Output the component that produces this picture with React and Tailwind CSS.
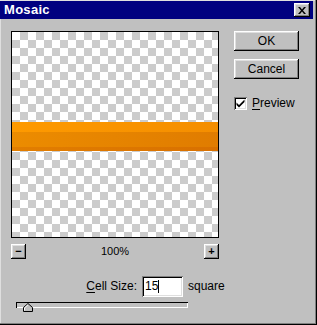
import React from "react";

const raised =
  "bg-[#c0c0c0] shadow-[inset_-1px_-1px_#000,inset_1px_1px_#fff,inset_-2px_-2px_#808080,inset_2px_2px_#dfdfdf]";
const sunken =
  "shadow-[inset_1px_1px_#808080,inset_-1px_-1px_#fff,inset_2px_2px_#000,inset_-2px_-2px_#dfdfdf]";

function Checker() {
  return (
    <div className="w-full h-full bg-white bg-[length:16px_16px] bg-[linear-gradient(45deg,#cccccc_25%,transparent_25%,transparent_75%,#cccccc_75%),linear-gradient(45deg,#cccccc_25%,transparent_25%,transparent_75%,#cccccc_75%)] bg-[position:0_0,8px_8px] flex flex-col">
      <div className="h-[90px]" />
      <div className="h-[29px] flex flex-col">
        <div className="h-[10px] bg-gradient-to-r from-[#fe9a00] to-[#f48e00]" />
        <div className="h-[15px] bg-gradient-to-r from-[#ec8c00] to-[#e07c00]" />
        <div className="h-[4px] bg-gradient-to-r from-[#e27e00] to-[#d87000]" />
      </div>
    </div>
  );
}

function Button({ children }) {
  return (
    <div className={`${raised} w-[65px] h-[20px] flex items-center justify-center text-[12px] text-black`}>
      {children}
    </div>
  );
}

function SmallButton({ children }) {
  return (
    <div className={`${raised} w-[15px] h-[15px] flex items-center justify-center text-[11px] leading-none font-bold text-black`}>
      {children}
    </div>
  );
}

export default function App() {
  return (
    <div
      className="w-[317px] h-[325px] bg-[#c0c0c0] shadow-[inset_-1px_-1px_#000,inset_-2px_-2px_#808080,inset_1px_1px_#dfdfdf] pt-[1px] pr-[4px] flex flex-col select-none"
      style={{ fontFamily: '"Liberation Sans", Arial, sans-serif' }}
    >
      <div className="h-[18px] bg-[#000080] flex items-center justify-between pl-[4px] pr-[3px]">
        <span className="text-white font-bold text-[13px] tracking-[0.3px]">Mosaic</span>
        <div className={`${raised} w-[16px] h-[14px] flex items-center justify-center`}>
          <svg width="8" height="7" viewBox="0 0 8 7">
            <path d="M0 0h2l2 2.5L6 0h2L5 3.5 8 7H6L4 4.5 2 7H0l3-3.5z" fill="#000" />
          </svg>
        </div>
      </div>

      <div className="flex pl-[11px] pt-[12px]">
        <div className="flex flex-col">
          <div className="w-[208px] h-[207px] border border-black">
            <Checker />
          </div>
          <div className="flex items-center justify-between mt-[5px]">
            <SmallButton>−</SmallButton>
            <span className="text-[11px] text-black">100%</span>
            <SmallButton>+</SmallButton>
          </div>
        </div>

        <div className="flex flex-col ml-[15px]">
          <Button>OK</Button>
          <div className="mt-[8px]">
            <Button>Cancel</Button>
          </div>
          <div className="flex items-center mt-[15px]">
            <div className={`${sunken} w-[13px] h-[13px] bg-white flex items-center justify-center`}>
              <svg width="9" height="9" viewBox="0 0 9 9">
                <path d="M0.5 3.5L3 6L8.5 0.5V3L3 8.5L0.5 6Z" fill="#000" />
              </svg>
            </div>
            <span className="ml-[5px] text-[12px] text-black">
              <span className="underline underline-offset-2">P</span>review
            </span>
          </div>
        </div>
      </div>

      <div className="flex items-center mt-[16px]">
        <div className="w-[137px] text-right text-[12px] text-black">
          <span className="underline underline-offset-2">C</span>ell Size:
        </div>
        <div className={`${sunken} ml-[5px] w-[41px] h-[21px] bg-white flex items-center pl-[3px]`}>
          <span className="text-[12px] text-black">15</span>
          <span className="w-px h-[13px] bg-black" />
        </div>
        <span className="ml-[5px] text-[12px] text-black">square</span>
      </div>

      <div className="relative mt-[5px] ml-[16px] w-[172px] h-[6px] bg-[#c0c0c0] shadow-[inset_1px_1px_#000,inset_-1px_-1px_#fff]">
        <svg className="absolute left-[7px] top-[1px]" width="10" height="9" viewBox="0 0 10 9">
          <path d="M0.5 8.5V4.5L5 0.5L9.5 4.5V8.5Z" fill="#c0c0c0" stroke="#000" />
          <path d="M1.5 7.5V5L5 1.8" fill="none" stroke="#fff" />
        </svg>
      </div>
    </div>
  );
}
